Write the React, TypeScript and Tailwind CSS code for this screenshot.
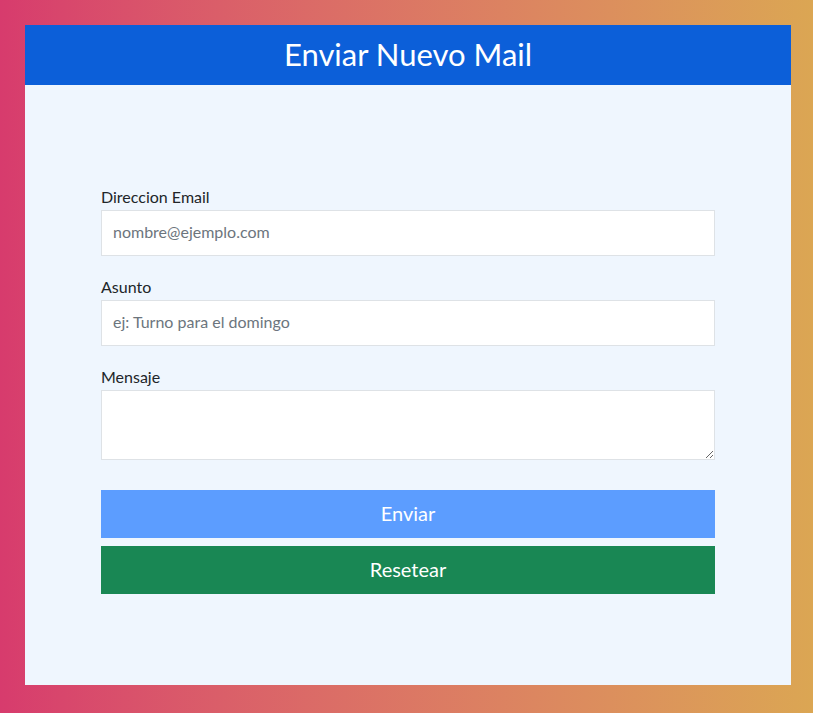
export default function App() {
  return (
    <div
      className="min-h-[713px] bg-linear-to-r from-[#d73b6d] to-[#dba653] pt-[25px] pb-[28px] pl-[25px] pr-[22px]"
      style={{ fontFamily: "Lato, 'Liberation Sans', sans-serif" }}
    >
      <div className="flex h-[660px] flex-col bg-[#eff6fe]">
        {/* Header */}
        <div className="flex h-[60px] items-center justify-center bg-[#0c5fd9]">
          <h1 className="pb-0.5 text-[31px] font-normal text-white">Enviar Nuevo Mail</h1>
        </div>

        {/* Form */}
        <form
          className="mx-auto flex w-[614px] flex-col pt-[101px]"
          onSubmit={(e) => e.preventDefault()}
        >
          <label className="h-6 text-base leading-[22px] text-[#212529]">Direccion Email</label>
          <input
            type="email"
            placeholder="nombre@ejemplo.com"
            className="h-[46px] border border-[#dee2e6] bg-white px-[11px] pb-1 text-base text-[#212529] outline-none placeholder:text-[#6c757d]"
          />

          <label className="mt-5 h-6 text-base leading-[22px] text-[#212529]">Asunto</label>
          <input
            type="text"
            placeholder="ej: Turno para el domingo"
            className="h-[46px] border border-[#dee2e6] bg-white px-[11px] pb-1 text-base text-[#212529] outline-none placeholder:text-[#6c757d]"
          />

          <label className="mt-5 h-6 text-base leading-[22px] text-[#212529]">Mensaje</label>
          <textarea className="h-[70px] border border-[#dee2e6] bg-white px-[11px] py-2 text-base text-[#212529] outline-none" />

          <button
            type="submit"
            className="mt-[30px] h-12 bg-[#5c9dff] pb-0.5 text-xl text-white"
          >
            Enviar
          </button>
          <button type="reset" className="mt-2 h-12 bg-[#198754] pb-0.5 text-xl text-white">
            Resetear
          </button>
        </form>
      </div>
    </div>
  );
}
